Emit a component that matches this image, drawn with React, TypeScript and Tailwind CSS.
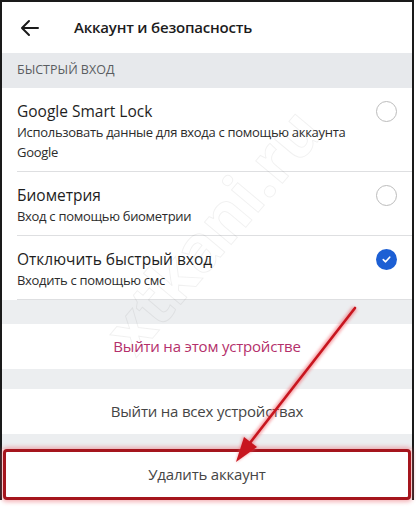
import React from 'react';

type Option = {
  title: string;
  subtitle: string;
  checked?: boolean;
};

const options: Option[] = [
  {
    title: 'Google Smart Lock',
    subtitle: 'Использовать данные для входа с помощью аккаунта Google',
  },
  { title: 'Биометрия', subtitle: 'Вход с помощью биометрии' },
  { title: 'Отключить быстрый вход', subtitle: 'Входить с помощью смс', checked: true },
];

const Radio = ({ checked }: { checked?: boolean }) =>
  checked ? (
    <span className="flex h-[21px] w-[21px] items-center justify-center rounded-full bg-[#1c5fd4]">
      <svg viewBox="0 0 12 12" className="h-[11px] w-[11px]" fill="none">
        <path d="M2.5 6.2 5 8.5l4.5-5" stroke="white" strokeWidth="1.8" strokeLinecap="round" strokeLinejoin="round" />
      </svg>
    </span>
  ) : (
    <span className="block h-[21px] w-[21px] rounded-full border-[1.5px] border-[#bcbcbc]" />
  );

const OptionRow = ({ option }: { option: Option }) => (
  <div className="ml-[15px] flex items-start border-b border-[#dedfe1] pb-[9px] pr-[15px] pt-[12px]">
    <div className="flex-1">
      <div className="text-[15.5px] leading-[22px] text-[#1e1e1e]">{option.title}</div>
      <div className="pr-[8px] text-[13px] leading-[20px] tracking-[-0.3px] text-[#2c2c2c]">{option.subtitle}</div>
    </div>
    <div className="mt-[1px]">
      <Radio checked={option.checked} />
    </div>
  </div>
);

const App = () => {
  return (
    <div className="relative h-[511px] w-[416px] overflow-hidden bg-white font-['Open_Sans',sans-serif]">
      <div className="w-[414px] border-l-2 border-r-2 border-t-2 border-[#1a1a1a] bg-white">
        {/* header */}
        <div className="flex h-[51px] items-center">
          <svg viewBox="0 0 24 24" className="ml-[16px] h-[24px] w-[24px]" fill="none">
            <path d="M20 12H4.5M11 5l-7 7 7 7" stroke="#1b1b1b" strokeWidth="2" strokeLinecap="round" strokeLinejoin="round" />
          </svg>
          <h1 className="ml-[32px] text-[15px] font-semibold tracking-[-0.2px] text-[#1c1c1c]">Аккаунт и безопасность</h1>
        </div>

        <div className="flex h-[35px] items-center bg-[#e7e9ec] pl-[15px] text-[12.5px] text-[#5a5d61]">
          БЫСТРЫЙ ВХОД
        </div>

        {options.map((o) => (
          <OptionRow key={o.title} option={o} />
        ))}

        <div className="h-[24px] bg-[#eceef0]" />
        <div className="flex h-[45px] items-center justify-center text-[15px] tracking-[-0.2px] text-[#b4306b]">
          Выйти на этом устройстве
        </div>
        <div className="h-[20px] bg-[#eceef0]" />
        <div className="flex h-[45px] items-center justify-center text-[15px] tracking-[-0.2px] text-[#454545]">
          Выйти на всех устройствах
        </div>
        <div className="h-[15px] bg-[#eceef0]" />
        <div className="mx-[1px] flex h-[51px] items-center justify-center rounded-[4px] border-[3px] border-[#a5151d] bg-white text-[15px] tracking-[-0.2px] text-[#454545] shadow-[0_0_4px_2px_rgba(230,90,100,0.45)]">
          Удалить аккаунт
        </div>
      </div>

      {/* watermark */}
      <div className="pointer-events-none absolute left-[65px] top-[182px] -rotate-[50deg] text-[64px] font-bold text-transparent [-webkit-text-stroke:1px_rgba(0,0,0,0.06)]">
        xtkani.ru
      </div>

      {/* annotation arrow */}
      <svg className="pointer-events-none absolute left-0 top-0" width="416" height="511" viewBox="0 0 416 511">
        <defs>
          <filter id="glow" x="-20%" y="-20%" width="140%" height="140%">
            <feGaussianBlur stdDeviation="1.6" />
          </filter>
        </defs>
        <g filter="url(#glow)" opacity="0.55">
          <line x1="355" y1="308" x2="246" y2="448" stroke="#f05a64" strokeWidth="6" />
          <polygon points="236,462 258,447 243,436" fill="#f05a64" />
        </g>
        <line x1="355" y1="308" x2="246" y2="448" stroke="#c8161f" strokeWidth="2.6" strokeLinecap="round" />
        <polygon points="236,462 257,447 244,437" fill="#c8161f" />
      </svg>
    </div>
  );
};

export default App;
